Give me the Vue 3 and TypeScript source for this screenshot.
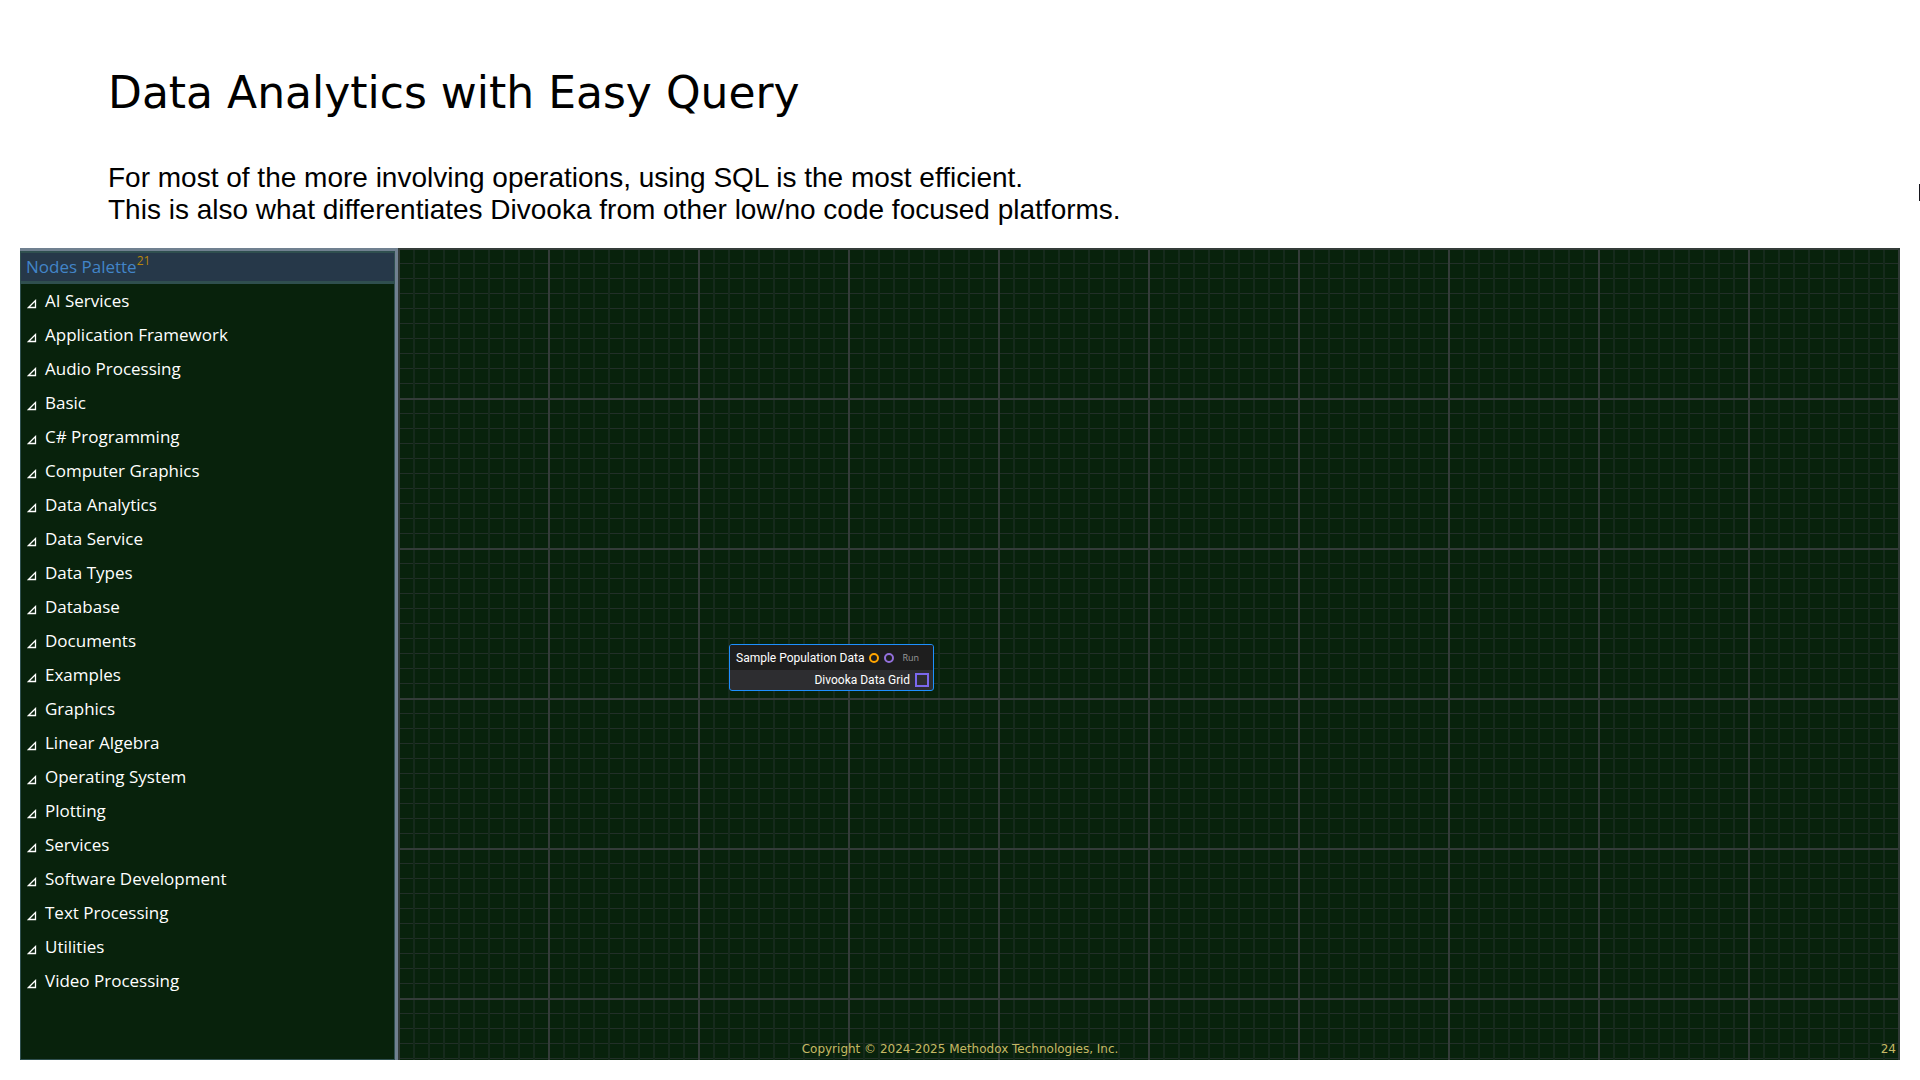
<script setup lang="ts">
import { ref } from 'vue'

const categories: string[] = [
  'AI Services',
  'Application Framework',
  'Audio Processing',
  'Basic',
  'C# Programming',
  'Computer Graphics',
  'Data Analytics',
  'Data Service',
  'Data Types',
  'Database',
  'Documents',
  'Examples',
  'Graphics',
  'Linear Algebra',
  'Operating System',
  'Plotting',
  'Services',
  'Software Development',
  'Text Processing',
  'Utilities',
  'Video Processing',
]

const selected = ref<string | null>(null)
</script>

<template>
  <main class="slide">
    <header class="intro">
      <h1>Data Analytics with Easy Query</h1>
      <p>
        For most of the more involving operations, using SQL is the most efficient.<br />
        This is also what differentiates Divooka from other low/no code focused platforms.
      </p>
      <span class="edge-mark"></span>
    </header>

    <div class="workspace">
      <aside class="palette">
        <h2>Nodes Palette<sup>{{ categories.length }}</sup></h2>
        <ul>
          <li v-for="name in categories" :key="name">
            <button type="button" @click="selected = name">
              <svg width="10" height="10" viewBox="0 0 10 10" aria-hidden="true">
                <path d="M1.5 8.5H8.5V1.5Z" />
              </svg>
              <span>{{ name }}</span>
            </button>
          </li>
        </ul>
      </aside>

      <section class="canvas">
        <article class="node">
          <div class="node-head">
            <span>Sample Population Data</span>
            <i class="ring orange"></i>
            <i class="ring purple"></i>
            <button type="button">Run</button>
          </div>
          <div class="node-output">
            <span>Divooka Data Grid</span>
            <i class="port"></i>
          </div>
        </article>
      </section>

      <footer>
        <span class="copyright">Copyright © 2024-2025 Methodox Technologies, Inc.</span>
        <span class="page">24</span>
      </footer>
    </div>
  </main>
</template>

<style>
body {
  margin: 0;
  background: #fff;
}
</style>

<style scoped>
.slide {
  box-sizing: border-box;
  display: flex;
  flex-direction: column;
  min-height: 100vh;
  padding: 0 20px 20px;
  color: #000;
}

.intro {
  position: relative;
  box-sizing: border-box;
  height: 248px;
  padding: 65px 88px 0;
}

h1 {
  margin: 0;
  font: 400 44px/56px Verdana, "DejaVu Sans", sans-serif;
}

.intro p {
  margin: 41px 0 0;
  font: 28px/32px "Liberation Sans", Arial, sans-serif;
}

.edge-mark {
  position: absolute;
  top: 184px;
  right: -20px;
  width: 1px;
  height: 17px;
  background: #16161d;
}

.workspace {
  position: relative;
  display: flex;
  flex: 1;
  background: #08220c;
}

.palette {
  box-sizing: border-box;
  flex: 0 0 378px;
  border-top: 3px solid #708090;
  border-right: 3px solid #708090;
  font-family: "Segoe UI", "Open Sans", sans-serif;
  box-shadow: inset 1px -1px #2f4f4f, inset -1px 0 #2f4f4f;
}

h2 {
  box-sizing: border-box;
  height: 33px;
  margin: 0;
  padding: 0 5px;
  border: solid #2f4f4f;
  border-width: 2px 1px 3px;
  background: #263849;
  color: #4285c8;
  font-size: 17px;
  font-weight: 400;
  line-height: 28px;
}

sup {
  position: relative;
  top: -8px;
  color: #b8860b;
  font-size: 12px;
  line-height: 1;
  vertical-align: baseline;
}

ul {
  margin: 0;
  padding: 0;
  list-style: none;
}

li button {
  display: flex;
  align-items: center;
  gap: 8px;
  width: 100%;
  height: 34px;
  padding: 0 7px;
  border: 0;
  background: none;
  color: #fff;
  font: 17px/34px "Segoe UI", "Open Sans", sans-serif;
  text-align: left;
}

li svg {
  margin-top: 5px;
  fill: none;
  stroke: #fff;
  stroke-width: 1.3;
}

.canvas {
  position: relative;
  box-sizing: border-box;
  flex: 1;
  border-right: 2px solid #303a36;
  background-image:
    linear-gradient(90deg, #343c39 2px, transparent 2px),
    linear-gradient(#343c39 2px, transparent 2px),
    linear-gradient(90deg, #162a1c 2px, transparent 2px),
    linear-gradient(#222f28 1px, transparent 1px);
  background-size: 150px 150px, 150px 150px, 15px 15px, 15px 15px;
}

.node {
  position: absolute;
  top: 396px;
  left: 331px;
  box-sizing: border-box;
  width: 205px;
  height: 47px;
  overflow: hidden;
  border: 1px solid #1e90ff;
  border-radius: 3px;
  background: #2d2d30;
  color: #fff;
  font: 12px/20px "Segoe UI", Roboto, sans-serif;
  white-space: nowrap;
}

.node-head {
  display: flex;
  align-items: center;
  gap: 5px;
  height: 25px;
  padding-left: 6px;
  background: #1e1e1e;
}

.ring {
  box-sizing: border-box;
  width: 10px;
  height: 10px;
  border: 2px solid #ffa500;
  border-radius: 50%;
}

.ring.purple {
  border-color: #9370db;
}

.node-head button {
  margin-left: 3px;
  padding: 0;
  border: 0;
  background: none;
  color: #9a9a9a;
  font: 9px/20px "Segoe UI", "Open Sans", sans-serif;
}

.node-output {
  display: flex;
  align-items: center;
  justify-content: flex-end;
  gap: 5px;
  height: 20px;
  padding-right: 4px;
}

.port {
  box-sizing: border-box;
  width: 14px;
  height: 14px;
  border: 2px solid #7b68ee;
}

footer {
  position: absolute;
  inset: auto 0 0;
  color: #c6b964;
  font: 12px/22px Verdana, "DejaVu Sans", sans-serif;
  text-align: center;
}

.page {
  position: absolute;
  right: 4px;
}
</style>
